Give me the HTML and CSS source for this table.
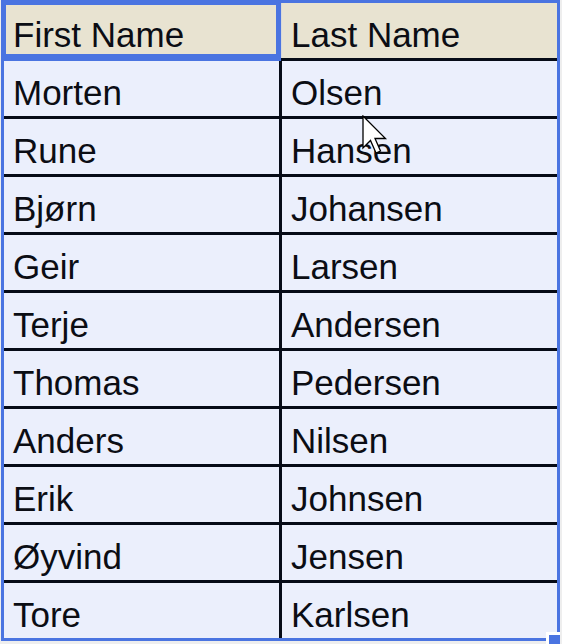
FILE: index.html
```html
<!DOCTYPE html>
<html lang="no">
<head>
<meta charset="utf-8">
<title>Names</title>
<link rel="stylesheet" href="styles.css">
</head>
<body>
<div class="sheet">
  <div class="row head">
    <div class="cell">First Name</div>
    <div class="cell">Last Name</div>
  </div>
  <div class="row"><div class="cell">Morten</div><div class="cell">Olsen</div></div>
  <div class="row"><div class="cell">Rune</div><div class="cell">Hansen</div></div>
  <div class="row"><div class="cell">Bjørn</div><div class="cell">Johansen</div></div>
  <div class="row"><div class="cell">Geir</div><div class="cell">Larsen</div></div>
  <div class="row"><div class="cell">Terje</div><div class="cell">Andersen</div></div>
  <div class="row"><div class="cell">Thomas</div><div class="cell">Pedersen</div></div>
  <div class="row"><div class="cell">Anders</div><div class="cell">Nilsen</div></div>
  <div class="row"><div class="cell">Erik</div><div class="cell">Johnsen</div></div>
  <div class="row"><div class="cell">Øyvind</div><div class="cell">Jensen</div></div>
  <div class="row last"><div class="cell">Tore</div><div class="cell">Karlsen</div></div>

  <div class="active"></div>
  <div class="handle"></div>
  <svg class="cursor" width="28" height="42" viewBox="0 0 28 42">
    <polygon points="1,1 1,33 8.5,25.5 14,38 18.5,36 13,23.5 23.5,23.5" fill="#ffffff" stroke="#000000" stroke-width="1.3" stroke-linejoin="miter"/>
  </svg>
</div>
</body>
</html>
```
FILE: styles.css
```css
html, body {
  margin: 0;
  padding: 0;
}
body {
  background: #eeeeee;
  width: 562px;
  height: 644px;
  overflow: hidden;
  font-family: "Liberation Sans", Arial, sans-serif;
}
.sheet {
  position: relative;
  margin-left: 1px;
  width: 553px;
  border: 3px solid #4a74e1;
  background: #060b17;
}
.row {
  display: grid;
  grid-template-columns: 275px 275px;
  column-gap: 3px;
  background: #060b17;
  border-bottom: 3px solid #060b17;
}
.row.last {
  border-bottom: none;
}
.row.head {
  background: #d9d9d9;
}
.cell {
  box-sizing: border-box;
  height: 55px;
  padding: 7px 0 0 9px;
  line-height: 49px;
  font-size: 35px;
  color: #0b0d14;
  background: #ebeffc;
  white-space: nowrap;
  overflow: hidden;
}
.head .cell {
  background: #e8e3d1;
}
.active {
  position: absolute;
  left: -3px;
  top: -3px;
  width: 280px;
  height: 61px;
  box-sizing: border-box;
  border: 5px solid #4a74e1;
  border-bottom-width: 7px;
}
.handle {
  position: absolute;
  left: 542px;
  top: 629px;
  width: 11px;
  height: 11px;
  background: #4a74e1;
  border-top: 3px solid #ffffff;
  border-left: 3px solid #ffffff;
}
.cursor {
  position: absolute;
  left: 358px;
  top: 112px;
}
```
